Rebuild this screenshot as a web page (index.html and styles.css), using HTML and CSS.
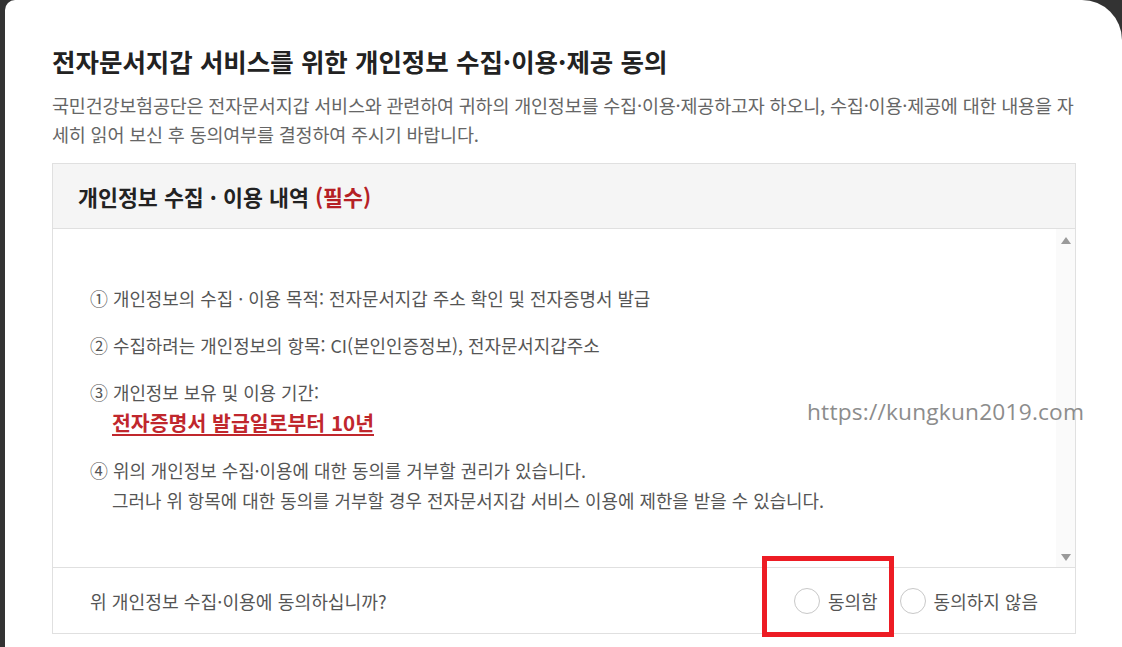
FILE: index.html
```html
<!DOCTYPE html>
<html lang="ko">
<head>
<meta charset="utf-8">
<title>전자문서지갑 서비스를 위한 개인정보 수집·이용·제공 동의</title>
<link rel="stylesheet" href="styles.css">
</head>
<body>
<div class="modal">
  <h1 class="title">전자문서지갑 서비스를 위한 개인정보 수집·이용·제공 동의</h1>
  <p class="desc">국민건강보험공단은 전자문서지갑 서비스와 관련하여 귀하의 개인정보를 수집·이용·제공하고자 하오니, 수집·이용·제공에 대한 내용을 자세히 읽어 보신 후 동의여부를 결정하여 주시기 바랍니다.</p>

  <section class="box">
    <div class="box-head">개인정보 수집 · 이용 내역 <span class="req">(필수)</span></div>
    <div class="box-body">
      <div class="items">
        <p class="item"><span class="num">①</span> 개인정보의 수집 · 이용 목적: 전자문서지갑 주소 확인 및 전자증명서 발급</p>
        <p class="item"><span class="num">②</span> 수집하려는 개인정보의 항목: CI(본인인증정보), 전자문서지갑주소</p>
        <p class="item"><span class="num">③</span> 개인정보 보유 및 이용 기간:<br><span class="period">전자증명서 발급일로부터 10년</span></p>
        <p class="item"><span class="num">④</span> 위의 개인정보 수집·이용에 대한 동의를 거부할 권리가 있습니다.<br>그러나 위 항목에 대한 동의를 거부할 경우 전자문서지갑 서비스 이용에 제한을 받을 수 있습니다.</p>
      </div>
      <div class="scrollbar">
        <span class="arrow up"></span>
        <span class="arrow down"></span>
      </div>
    </div>
    <div class="box-foot">
      <span class="question">위 개인정보 수집·이용에 동의하십니까?</span>
      <div class="choices">
        <label class="choice"><span class="radio"></span>동의함</label>
        <label class="choice"><span class="radio"></span>동의하지 않음</label>
      </div>
    </div>
  </section>

  <div class="watermark">https://kungkun2019.com</div>
  <div class="highlight"></div>
</div>
</body>
</html>
```

FILE: styles.css
```css
html, body {
  margin: 0;
  padding: 0;
}
body {
  background: #333333;
  width: 1122px;
  height: 647px;
  overflow: hidden;
  font-family: "Noto Sans CJK KR", "Noto Sans", sans-serif;
}
.modal {
  position: relative;
  margin-left: 5px;
  width: 1117px;
  height: 647px;
  overflow: hidden;
  background: #ffffff;
  border-radius: 10px 40px 0 0;
  padding: 44px 0 0 47px;
  box-sizing: border-box;
}
.title {
  margin: 0;
  font-size: 25.5px;
  line-height: 34px;
  font-weight: 700;
  color: #222222;
  letter-spacing: 0;
}
.desc {
  margin: 13px 0 0;
  width: 1035px;
  font-size: 18.5px;
  line-height: 29px;
  color: #666666;
  letter-spacing: -0.2px;
}
.box {
  margin-top: 14px;
  width: 1024px;
  border: 1px solid #e0e0e0;
  box-sizing: border-box;
}
.box-head {
  height: 64px;
  background: #f5f5f5;
  border-bottom: 1px solid #e0e0e0;
  padding-left: 25px;
  display: flex;
  align-items: center;
  font-size: 21.7px;
  font-weight: 700;
  color: #222222;
  letter-spacing: 0;
}
.req {
  color: #b52025;
  margin-left: 6px;
}
.box-body {
  height: 338px;
  display: flex;
  border-bottom: 1px solid #e0e0e0;
}
.items {
  flex: 1;
  padding: 54px 0 0 37px;
}
.item {
  margin: 0 0 17px;
  font-size: 17.9px;
  line-height: 30px;
  color: #555555;
  padding-left: 22px;
  text-indent: -22px;
}
.num {
  display: inline-block;
  text-indent: 0;
}
.period {
  font-size: 20.5px;
  font-weight: 700;
  color: #c0272d;
  text-decoration: underline;
  text-underline-offset: 3px;
}
.scrollbar {
  width: 19px;
  background: #fafafa;
  display: flex;
  flex-direction: column;
  justify-content: space-between;
  align-items: center;
  padding: 8px 0 6px;
  box-sizing: border-box;
}
.arrow {
  width: 0;
  height: 0;
  border-left: 5px solid transparent;
  border-right: 5px solid transparent;
}
.arrow.up {
  border-bottom: 7px solid #9a9a9a;
}
.arrow.down {
  border-top: 7px solid #9a9a9a;
}
.box-foot {
  height: 65px;
  display: flex;
  align-items: center;
  justify-content: space-between;
  padding: 0 37px 0 37px;
}
.question {
  font-size: 18.2px;
  color: #555555;
}
.choices {
  display: flex;
  align-items: center;
  gap: 22px;
}
.choice {
  display: flex;
  align-items: center;
  gap: 8px;
  font-size: 18px;
  color: #555555;
}
.radio {
  width: 24px;
  height: 24px;
  border: 1px solid #c8c8c8;
  border-radius: 50%;
  background: #ffffff;
}
.watermark {
  position: absolute;
  left: 802px;
  top: 397px;
  font-family: "Open Sans", "Noto Sans", sans-serif;
  font-size: 22.7px;
  line-height: 30px;
  color: #8c8c8c;
  letter-spacing: 0.2px;
}
.highlight {
  position: absolute;
  left: 757px;
  top: 556px;
  width: 132px;
  height: 81px;
  border: 5px solid #ed1c24;
  box-sizing: border-box;
}
```
